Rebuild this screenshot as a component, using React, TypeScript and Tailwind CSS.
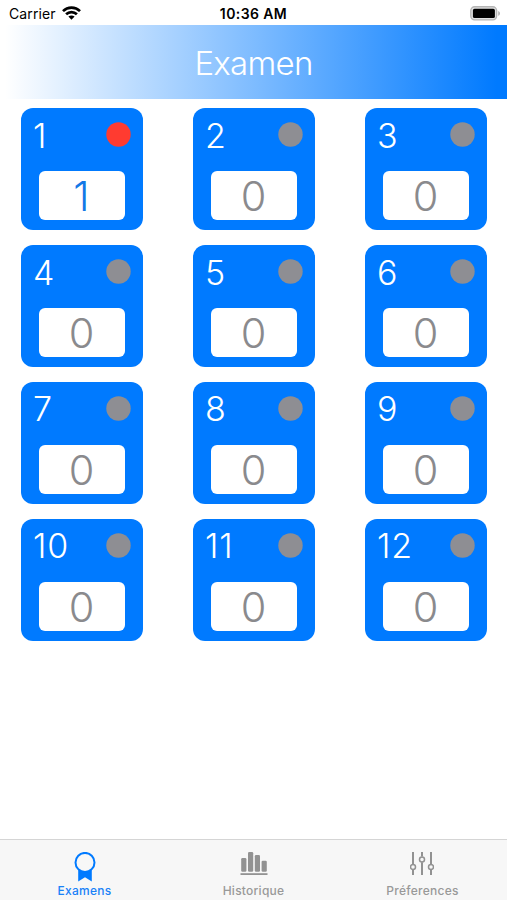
type Exam = { id: number; count: number };

const exams: Exam[] = Array.from({ length: 12 }, (_, i) => ({ id: i + 1, count: i === 0 ? 1 : 0 }));

function StatusBar() {
  return (
    <div className="grid h-[25px] shrink-0 grid-cols-3 items-center text-black">
      <div className="flex items-center gap-[6px] pl-[9px] pt-[2px]">
        <span className="text-[14px] leading-[20px] tracking-[0.1px]">Carrier</span>
        <svg className="-mt-[2px]" width="19" height="14" viewBox="0 0 19 14" fill="none" stroke="black" strokeWidth="2.7">
          <path d="M1 5.1C5.7 0.5 13.3 0.5 18 5.1" />
          <path d="M4.1 8.3C7.1 5.4 11.9 5.4 14.9 8.3" />
          <path d="M9.5 13.7L6.4 10.6C8.2 9.1 10.8 9.1 12.6 10.6Z" fill="black" stroke="none" />
        </svg>
      </div>
      <div className="whitespace-nowrap pt-[2px] text-center text-[14px] font-semibold leading-[20px] tracking-[0.4px]">10:36 AM</div>
      <div className="flex justify-end pr-[6px] pt-[1px]">
        <svg width="31" height="15" viewBox="0 0 31 15">
          <rect x="0.8" y="0.8" width="25.8" height="13.1" rx="3.8" fill="#e2e2e2" stroke="#b5b5b5" strokeWidth="1.4" />
          <rect x="2.9" y="2.8" width="22" height="9.2" rx="1.6" fill="black" />
          <path d="M28.2 4.9C30.6 5.9 30.6 8.8 28.2 9.8Z" fill="#b5b5b5" />
        </svg>
      </div>
    </div>
  );
}

function ExamCard({ id, count }: Exam) {
  const active = count > 0;
  return (
    <div className="flex h-[122px] w-[122px] flex-col items-center rounded-[12px] bg-[#007aff] pt-[14px]">
      <div className="flex h-[25px] w-full items-center justify-between pl-[12px] pr-[12px]">
        <span className={`pt-[2px] text-[34px] font-[340] leading-none text-white ${id >= 10 ? "tracking-[0.9px]" : ""}`}>{id}</span>
        <svg width="25" height="25" viewBox="0 0 25 25" fill={active ? "#ff3b30" : "#8e8e93"}>
          <circle cx="12.5" cy="12.5" r="12.2" />
        </svg>
      </div>
      <div className="mt-[24px] flex h-[49px] w-[86px] items-center justify-center rounded-[6px] bg-white pt-[2px] pr-[1px]">
        <span className={`text-[41.5px] font-[330] leading-none ${active ? "text-[#1478e6]" : "text-[#8a8a8d]"}`}>{count}</span>
      </div>
    </div>
  );
}

function AwardIcon() {
  return (
    <svg width="22" height="30" viewBox="0 0 22 30">
      <path d="M4.2 17.5V29.5L11 25.3L17.8 29.5V17.5Z" fill="#007aff" />
      <circle cx="11" cy="10.4" r="9.5" fill="#f7f7f7" stroke="#007aff" strokeWidth="2" />
    </svg>
  );
}

function HistoryIcon() {
  return (
    <svg width="28" height="30" viewBox="0 0 28 30" fill="#929292">
      <rect x="1.2" y="6" width="5.2" height="13.8" rx="1.2" />
      <rect x="8" y="0" width="5.2" height="19.8" rx="1.2" />
      <rect x="14.8" y="3" width="5.2" height="16.8" rx="1.2" />
      <rect x="21.6" y="8.7" width="5.2" height="11.1" rx="1.2" />
      <rect x="0.5" y="21.2" width="27" height="1.8" />
    </svg>
  );
}

function SlidersIcon() {
  return (
    <svg className="mr-[2px]" width="24" height="30" viewBox="0 0 24 30" fill="none" stroke="#929292" strokeWidth="2">
      <path d="M3 0V12.1M3 17.9V23M12 0V4.5M12 10.3V23M21 0V12.1M21 17.9V23" />
      <circle cx="3" cy="15" r="2.5" strokeWidth="1.5" />
      <circle cx="12" cy="7.4" r="2.5" strokeWidth="1.5" />
      <circle cx="21" cy="15" r="2.5" strokeWidth="1.5" />
    </svg>
  );
}

const tabs = [
  { label: "Examens", icon: <AwardIcon />, active: true },
  { label: "Historique", icon: <HistoryIcon />, active: false },
  { label: "Préferences", icon: <SlidersIcon />, active: false },
];

export default function App() {
  return (
    <div className="flex h-[900px] w-[507px] flex-col overflow-hidden bg-white font-['Inter','Liberation_Sans',sans-serif]">
      <StatusBar />
      <header className="flex h-[73.5px] shrink-0 items-center justify-center bg-[linear-gradient(90deg,#ffffff_1%,#007aff_98%)]">
        <h1 className="pt-[3px] text-[33px] font-[330] leading-none tracking-[-0.75px] text-white">Examen</h1>
      </header>
      <main className="grid shrink-0 grid-cols-[122px_122px_122px] gap-x-[50px] gap-y-[14.8px] pl-[21px] pt-[9.9px]">
        {exams.map((e) => (
          <ExamCard key={e.id} id={e.id} count={e.count} />
        ))}
      </main>
      <nav className="mt-auto grid h-[61px] shrink-0 grid-cols-3 border-t border-[#d5d5d5] bg-[#f7f7f7]">
        {tabs.map((t) => (
          <div key={t.label} className={`flex flex-col items-center pt-[12px] ${t.active ? "text-[#1a82f7]" : "text-[#999999]"}`}>
            {t.icon}
            <span className="mt-[1px] text-[12px] font-medium leading-[16px] tracking-[0.25px]">{t.label}</span>
          </div>
        ))}
      </nav>
    </div>
  );
}
